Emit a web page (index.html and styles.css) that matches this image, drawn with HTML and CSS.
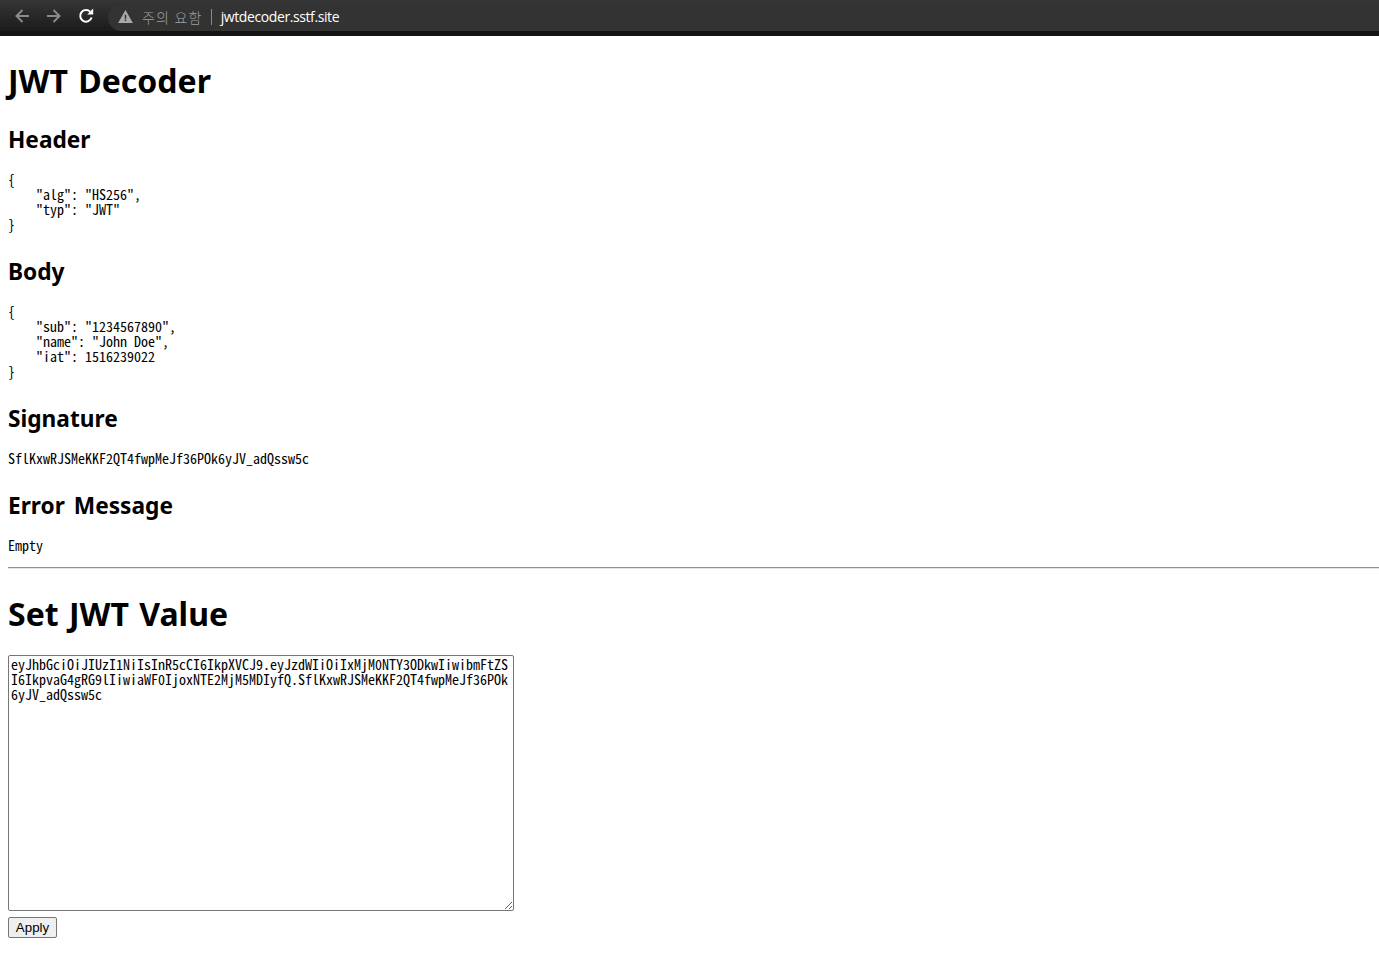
FILE: index.html
```html
<!DOCTYPE html>
<html lang="en">
<head>
<meta charset="utf-8">
<title>JWT Decoder</title>
<link rel="stylesheet" href="styles.css">
</head>
<body>
<div class="chrome">
  <div class="toolbar">
    <svg class="nav dim" viewBox="0 0 16 16"><path d="M15 8H2.5M8.5 2 2.5 8l6 6"/></svg>
    <svg class="nav dim" viewBox="0 0 16 16"><path d="M1 8h12.5M7.5 2l6 6-6 6"/></svg>
    <svg class="nav bright" viewBox="0 0 16 16"><path d="M13.6 9.5A5.8 5.8 0 1 1 12.2 3.8"/><path class="fill" d="M9.2 6.6h6V.6z"/></svg>
    <div class="omnibox">
      <svg class="warn" viewBox="0 0 16 14"><path d="M8 0 16 14H0z"/><path class="mark" d="M7.2 5h1.6v4.4H7.2zM7.2 10.2h1.6v1.6H7.2z"/></svg>
      <span class="warn-text">주의 요함</span>
      <span class="sep"></span>
      <span class="url">jwtdecoder.sstf.site</span>
    </div>
  </div>
</div>
<main class="page">
  <h1>JWT Decoder</h1>
  <h2>Header</h2>
  <pre>{
    "alg": "HS256",
    "typ": "JWT"
}</pre>
  <h2>Body</h2>
  <pre>{
    "sub": "1234567890",
    "name": "John Doe",
    "iat": 1516239022
}</pre>
  <h2>Signature</h2>
  <pre>SflKxwRJSMeKKF2QT4fwpMeJf36POk6yJV_adQssw5c</pre>
  <h2>Error Message</h2>
  <pre>Empty</pre>
  <hr>
  <h1>Set JWT Value</h1>
  <textarea class="jwt-input" spellcheck="false">eyJhbGciOiJIUzI1NiIsInR5cCI6IkpXVCJ9.eyJzdWIiOiIxMjM0NTY3ODkwIiwibmFtZSI6IkpvaG4gRG9lIiwiaWF0IjoxNTE2MjM5MDIyfQ.SflKxwRJSMeKKF2QT4fwpMeJf36POk6yJV_adQssw5c</textarea>
  <button class="apply" type="button">Apply</button>
</main>
</body>
</html>
```
FILE: styles.css
```css
html, body {
  margin: 0;
  padding: 0;
  background: #fff;
}
body {
  font-family: "Noto Sans", "Noto Sans CJK KR", sans-serif;
  color: #000;
}
.chrome {
  height: 36px;
  background: #141414;
  box-sizing: border-box;
  padding-bottom: 5px;
}
.toolbar {
  height: 31px;
  background: linear-gradient(#363636, #1b1b1b);
  display: flex;
  align-items: flex-end;
  padding-left: 14px;
  gap: 16px;
}
.nav {
  width: 16px;
  height: 16px;
  align-self: center;
  fill: none;
  stroke-width: 2;
}
.nav.dim { stroke: #8a8a8a; }
.nav.bright { stroke: #fff; }
.nav .fill { fill: #fff; stroke: none; }
.omnibox {
  flex: 1;
  box-sizing: border-box;
  height: 27px;
  margin-left: -2px;
  background: #333;
  border-radius: 14px 0 0 14px;
  display: flex;
  align-items: center;
  padding: 0 0 2px 10px;
}
.warn {
  width: 15px;
  height: 13px;
  fill: #a9a9a9;
}
.warn .mark { fill: #2f2f2f; }
.warn-text {
  margin-left: 9px;
  font-family: "Noto Sans CJK KR", sans-serif;
  font-size: 14px;
  letter-spacing: 1.2px;
  color: #a0a0a0;
  font-weight: 300;
}
.sep {
  width: 1px;
  height: 16px;
  background: #8a8a8a;
  margin: 0 9px 0 8px;
}
.url {
  font-family: "Open Sans", "Noto Sans", sans-serif;
  font-size: 14px;
  color: #fff;
  letter-spacing: -0.4px;
}
.page {
  padding-left: 8px;
  display: flow-root;
}
h1 {
  font-size: 32px;
  line-height: 42.5px;
  font-weight: 700;
  margin: 23.94px 0 18.94px;
  word-spacing: 2px;
}
h2 {
  font-size: 22.7px;
  line-height: 32px;
  font-weight: 700;
  margin: 24px 0 16px;
  word-spacing: 3px;
}
h1 + h2 {
  margin-top: 21.94px;
}
pre {
  font-family: "Noto Sans Mono CJK KR", "Liberation Mono", monospace;
  font-size: 14px;
  line-height: 15px;
  margin: 16px 0 14px;
}
hr {
  border: 0;
  border-top: 1px solid #8f8f8f;
  border-bottom: 1px solid #e4e4e4;
  margin: 12px 0 0;
}
.jwt-input {
  display: block;
  box-sizing: border-box;
  width: 506px;
  height: 256px;
  margin: 0 0 6px;
  padding: 1px 2px 2px;
  border: 1px solid #767676;
  border-radius: 2px;
  font-family: "Noto Sans Mono CJK KR", "Liberation Mono", monospace;
  font-size: 14px;
  line-height: 15px;
  overflow: hidden;
}
.apply {
  display: block;
  box-sizing: border-box;
  width: 49px;
  height: 21px;
  padding: 0;
  border: 1px solid #767676;
  border-radius: 2px;
  background: #efefef;
  font-family: "Liberation Sans", sans-serif;
  font-size: 13.33px;
  color: #000;
}
```
